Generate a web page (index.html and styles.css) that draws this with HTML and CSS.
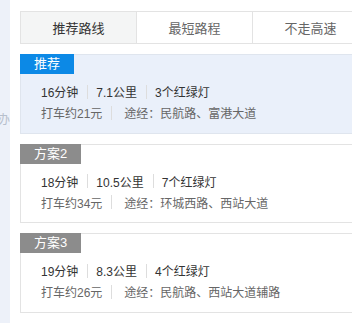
FILE: index.html
```html
<!DOCTYPE html>
<html lang="zh">
<head>
<meta charset="utf-8">
<link rel="stylesheet" href="styles.css">
</head>
<body>
<div class="page">
  <div class="strip"><span class="strip-text">·办</span></div>
  <div class="panel">
    <div class="tabs">
      <div class="tab active">推荐路线</div>
      <div class="tab">最短路程</div>
      <div class="tab">不走高速</div>
    </div>
    <div class="card current">
      <div class="badge blue">推荐</div>
      <div class="rows">
        <div class="row main"><span>16分钟</span><i class="sep"></i><span>7.1公里</span><i class="sep"></i><span>3个红绿灯</span></div>
        <div class="row sub"><span>打车约21元</span><i class="sep wide"></i><span>途经：民航路、富港大道</span></div>
      </div>
    </div>
    <div class="card">
      <div class="badge gray">方案2</div>
      <div class="rows">
        <div class="row main"><span>18分钟</span><i class="sep"></i><span>10.5公里</span><i class="sep"></i><span>7个红绿灯</span></div>
        <div class="row sub"><span>打车约34元</span><i class="sep wide"></i><span>途经：环城西路、西站大道</span></div>
      </div>
    </div>
    <div class="card">
      <div class="badge gray">方案3</div>
      <div class="rows">
        <div class="row main"><span>19分钟</span><i class="sep"></i><span>8.3公里</span><i class="sep"></i><span>4个红绿灯</span></div>
        <div class="row sub"><span>打车约26元</span><i class="sep wide"></i><span>途经：民航路、西站大道辅路</span></div>
      </div>
    </div>
  </div>
</div>
</body>
</html>
```
FILE: styles.css
```css
* { box-sizing: border-box; }
html, body {
  margin: 0;
  padding: 0;
  background: #ffffff;
  overflow: hidden;
}
body {
  width: 352px;
  height: 323px;
  font-family: "Liberation Sans", "Noto Sans CJK SC", sans-serif;
  font-size: 12px;
}
.page {
  display: flex;
  width: 420px;
  height: 323px;
}
.strip {
  width: 10px;
  flex-shrink: 0;
  background: #edf1f9;
  display: flex;
  justify-content: flex-end;
  overflow: hidden;
  padding-top: 113px;
}
.strip-text {
  flex-shrink: 0;
  color: #b7bfcc;
  font-size: 12px;
  line-height: 14px;
  height: 14px;
  white-space: nowrap;
}
.panel {
  width: 358px;
  flex-shrink: 0;
  padding: 11px 0 0 10px;
  display: flex;
  flex-direction: column;
}
.tabs {
  display: flex;
  border: 1px solid #e3e3e3;
  height: 34px;
  margin-bottom: 10px;
}
.tab {
  width: 116px;
  flex-shrink: 0;
  display: flex;
  align-items: center;
  justify-content: center;
  font-size: 13px;
  color: #666;
  border-left: 1px solid #e3e3e3;
}
.tab:first-child { border-left: none; width: 115px; }
.tab.active {
  background: #f4f5f5;
  color: #333;
}
.card {
  border: 1px solid #e3e3e3;
  background: #fff;
  margin-bottom: 10px;
  height: 81px;
}
.card.current {
  background: #eaf0fa;
  border-color: #dfe5ee;
}
.badge {
  display: inline-block;
  margin: -1px 0 0 -1px;
  height: 20px;
  line-height: 20px;
  padding: 0 14px;
  font-size: 13px;
  color: #fff;
}
.badge.blue { background: #0c89e6; }
.badge.gray { background: #8c8c8c; }
.rows {
  padding: 7px 0 0 20px;
}
.row {
  display: flex;
  align-items: center;
  height: 21px;
  white-space: nowrap;
}
.row.main { color: #333; }
.row.sub { color: #666; }
.sep {
  display: block;
  width: 1px;
  height: 14px;
  background: #dddddd;
  margin: 0 8px 0 9px;
}
.sep.wide { margin: 0 12px 0 9px; }
```
